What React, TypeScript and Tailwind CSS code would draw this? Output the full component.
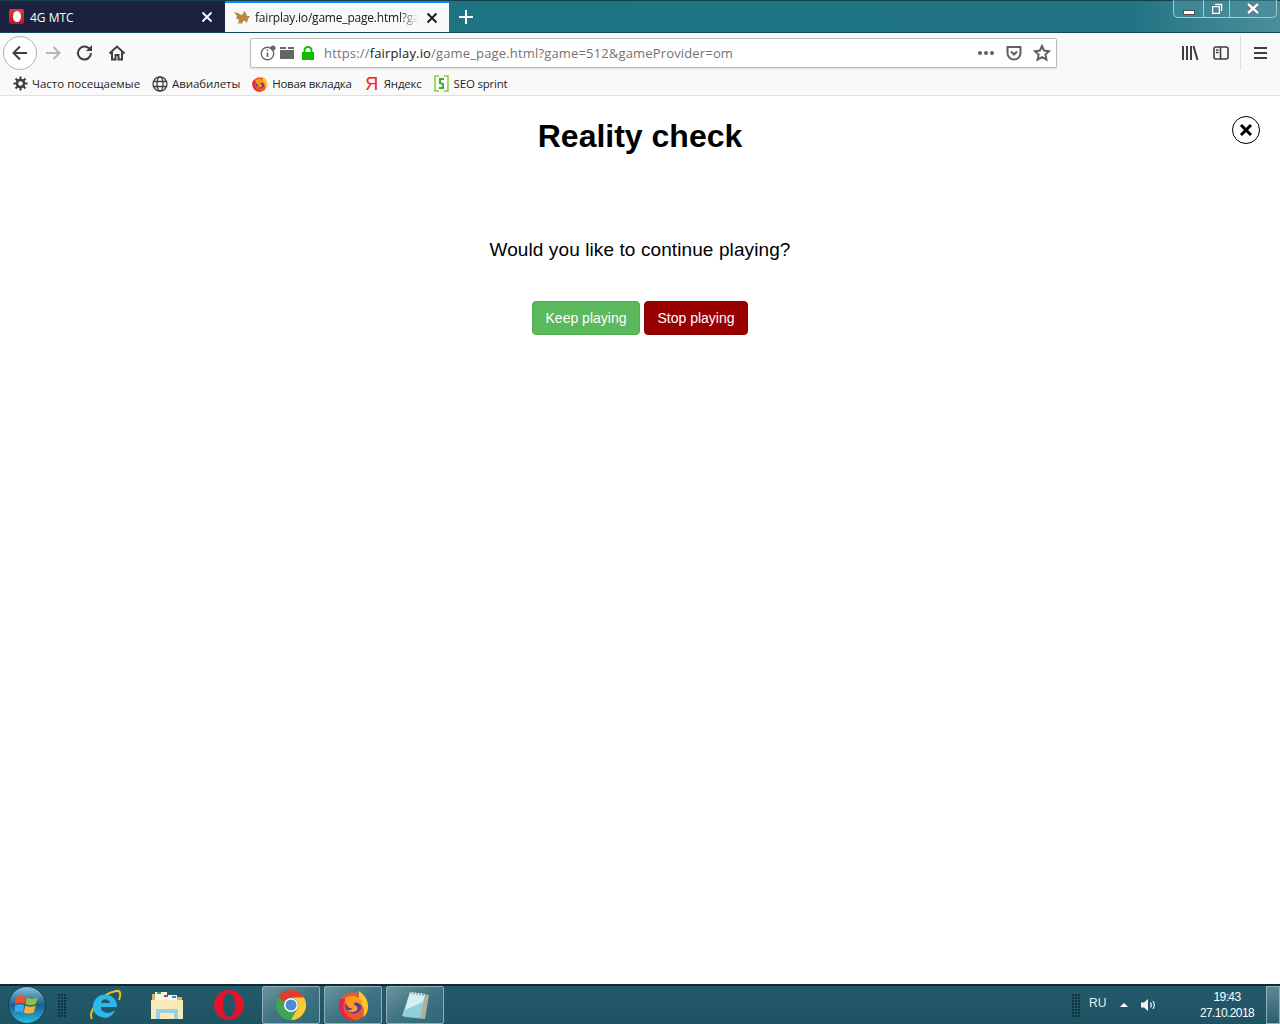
import React from 'react';

const uiFont = "font-['Open_Sans','Noto_Sans',sans-serif]";

const FirefoxIcon = ({ size = 16 }: { size?: number }) => (
    <svg width={size} height={size} viewBox="0 0 32 32">
        <circle cx="15.500" cy="17" r="14.500" fill="#f0582a" />
        <path d="M21 1c6 3 10 9 10 16 0 5-2 9-5 11 2-7 0-14-5-18 1-3 1-6 0-9z" fill="#ffc62e" />
        <path d="M2 9C0 14 0 21 4 26c4 5 10 6 15 5-7-1-12-5-13-11-1-4 0-8 2-11z" fill="#e0234f" />
        <circle cx="16" cy="16" r="8.500" fill="#4f3bb0" />
        <path d="M7 9c4-3 10-4 14-1 3 2 5 6 4 10-1-3-4-5-7-5-2 0-2 2 0 3 3 1 3 5 0 6-3 2-7 1-9-2 2 1 4 1 6-1-4 0-7-3-8-10z" fill="#ff9a1f" />
    </svg>
);

const ToolIcon = ({ children, className = '' }: { children: React.ReactNode; className?: string }) => (
    <svg width="20" height="20" viewBox="0 0 20 20" fill="none" className={className}>
        {children}
    </svg>
);

const Bookmark = ({ icon, label, labelClass = '' }: { icon: React.ReactNode; label: string; labelClass?: string }) => (
    <div className="flex items-center gap-[4px]">
        <div className="flex w-[16px] h-[16px] items-center justify-center">{icon}</div>
        <span className={`text-[11.5px] leading-none text-[#1f1f1f] ${labelClass}`}>{label}</span>
    </div>
);

const Grip = () => (
    <div className="grid grid-cols-3 gap-[1px] w-[8px]">
        {Array.from({ length: 24 }).map((_, i) => (
            <div key={i} className="w-[2px] h-[2px] bg-[#12333e]" />
        ))}
    </div>
);

const TaskSlot = ({ active, children }: { active?: boolean; children: React.ReactNode }) => (
    <div
        className={
            active
                ? 'flex w-[58px] h-[38px] items-center justify-center rounded-[2px] border border-[#8fb0b8] bg-gradient-to-br from-[#6b939e] via-[#3f7482] to-[#2f6675]'
                : 'flex w-[58px] h-[38px] items-center justify-center'
        }
    >
        {children}
    </div>
);

const TabStrip = () => (
    <div className="flex h-[33px] bg-gradient-to-r from-[#1e7383] via-[#1f7383] via-[88%] to-[#4a8e9b] border-t border-[#123f4a] border-b border-b-[#0f4a56]">
        <div className="flex w-[225px] items-center bg-[#1c2140] pl-[9px] pr-[12px]">
            <div className="flex w-[15px] h-[15px] items-center justify-center rounded-[2px] bg-gradient-to-b from-[#ea3a34] to-[#b5161c]">
                <div className="w-[8px] h-[11px] rounded-[50%] bg-white" />
            </div>
            <span className="ml-[6px] flex-1 pt-[2px] text-[12px] font-medium text-white">4G МТС</span>
            <svg width="12" height="12" viewBox="0 0 12 12" stroke="#fff" strokeWidth="1.8">
                <path d="M1.5 1.5l9 9M10.5 1.5l-9 9" />
            </svg>
        </div>
        <div className="flex w-[224px] items-center bg-[#f9f9fa] border-t-2 border-[#0a84ff] pl-[9px] pr-[11px]">
            <svg width="16" height="13" viewBox="0 0 16 13" fill="#b8873b">
                <path d="M0 1l4 1 3 2 2-1 1-3 2 2 1 3 3 0-2 3-1 4-2-2-2 0-1 3-2-1-2 1 1-4-3-2 1-2z" />
            </svg>
            <span className="ml-[5px] w-[164px] whitespace-nowrap text-[12px] tracking-[-0.2px] text-[#18181a] [mask-image:linear-gradient(to_right,black_88%,transparent)]">
                fairplay.io/game_page.html?ga
            </span>
            <svg className="ml-auto" width="12" height="12" viewBox="0 0 12 12" stroke="#18181a" strokeWidth="1.8">
                <path d="M1.5 1.5l9 9M10.5 1.5l-9 9" />
            </svg>
        </div>
        <div className="flex w-[34px] items-center justify-center">
            <svg width="14" height="14" viewBox="0 0 14 14" stroke="#fff" strokeWidth="2">
                <path d="M7 0v14M0 7h14" />
            </svg>
        </div>
        <div className="ml-auto mr-[3px] -mt-px flex w-[104px] h-[18px] rounded-b-[5px] border border-t-0 border-[#a9c9cf] bg-[#4a8f9c]/50">
            <div className="flex w-[30px] items-end justify-center pb-[2px] border-r border-[#a9c9cf]">
                <div className="w-[12px] h-[5px] bg-white border border-[#555]" />
            </div>
            <div className="flex w-[26px] items-center justify-center border-r border-[#a9c9cf]">
                <svg width="12" height="12" viewBox="0 0 12 12" fill="none">
                    <path d="M4 1.500h6.500V8" stroke="#fff" strokeWidth="1.500" />
                    <rect x="1.500" y="3.500" width="7" height="7" stroke="#fff" strokeWidth="1.500" />
                    <rect x="0.500" y="2.500" width="9" height="9" stroke="#555" strokeWidth="0.500" />
                </svg>
            </div>
            <div className="flex flex-1 items-center justify-center">
                <svg width="14" height="11" viewBox="0 0 14 11">
                    <path d="M2 1l10 9M12 1L2 10" stroke="#555" strokeWidth="3.600" />
                    <path d="M2 1l10 9M12 1L2 10" stroke="#fff" strokeWidth="2.400" />
                </svg>
            </div>
        </div>
    </div>
);

const NavToolbar = () => (
    <div className="flex h-[39px] items-center bg-[#f9f9fa]">
        <div className="ml-[3px] flex w-[34px] h-[34px] items-center justify-center rounded-full border border-[#b1b1b3] bg-white">
            <ToolIcon>
                <path d="M17 10H4M10 3.5L3.5 10l6.500 6.500" stroke="#3f3f41" strokeWidth="2" />
            </ToolIcon>
        </div>
        <ToolIcon className="ml-[6px]">
            <path d="M3 10h13M10.500 4l6 6-6 6" stroke="#b5b5b7" strokeWidth="2" />
        </ToolIcon>
        <ToolIcon className="ml-[12px]">
            <path d="M16 10a6.500 6.500 0 1 1-2-4.700L16 7" stroke="#3f3f41" strokeWidth="2" />
            <path d="M17 2v6h-6z" fill="#3f3f41" />
        </ToolIcon>
        <ToolIcon className="ml-[12px]">
            <path d="M2.500 10.500L10 3.500l7.500 7M5 9v7.500h3.500V12h3v4.500H15V9" stroke="#3f3f41" strokeWidth="2" />
        </ToolIcon>
        <div className="ml-[123px] flex w-[807px] h-[30px] items-center rounded-[2px] border border-[#bcbcbc] bg-white shadow-[0_1px_2px_rgba(0,0,0,0.1)] pl-[9px] pr-[5px]">
            <svg width="16" height="16" viewBox="0 0 16 16" fill="none">
                <circle cx="7.500" cy="8.500" r="6.200" stroke="#666" strokeWidth="1.400" />
                <path d="M7.500 7.500v4.500M7.500 4.500v1.600" stroke="#666" strokeWidth="1.600" />
                <circle cx="13" cy="3" r="2.500" fill="#666" />
            </svg>
            <svg className="ml-[4px]" width="14" height="12" viewBox="0 0 14 12" fill="#666">
                <path d="M0 0h6v2H0zM8 0h6v2H8zM0 3h14v9H0z" />
            </svg>
            <svg className="ml-[7px]" width="14" height="14" viewBox="0 0 14 14" fill="#12bc00">
                <path d="M1 6h12v8H1z" />
                <path d="M3.500 6.500V4.500a3.500 3.500 0 0 1 7 0v2" fill="none" stroke="#12bc00" strokeWidth="2" />
            </svg>
            <div className="ml-[9px] flex-1 whitespace-nowrap pt-[3px] text-[13px] tracking-[0.16px] text-[#737373]">
                https://<span className="text-[#18181a]">fairplay.io</span>/game_page.html?game=512&amp;gameProvider=om
            </div>
            <div className="flex gap-[2px]">
                <div className="w-[4px] h-[4px] rounded-full bg-[#5f5f61]" />
                <div className="w-[4px] h-[4px] rounded-full bg-[#5f5f61]" />
                <div className="w-[4px] h-[4px] rounded-full bg-[#5f5f61]" />
            </div>
            <svg className="ml-[11px]" width="18" height="18" viewBox="0 0 18 18" fill="none" stroke="#5f5f61" strokeWidth="2">
                <path d="M2.500 3h13v6a6.500 6.500 0 0 1-13 0z" />
                <path d="M6 7.500l3 3 3-3" />
            </svg>
            <svg className="ml-[10px]" width="18" height="18" viewBox="0 0 18 18" fill="none" stroke="#5f5f61" strokeWidth="2">
                <path d="M9 2l2.100 4.600 5 .6-3.700 3.400 1 5L9 13.100 4.600 15.600l1-5L1.900 7.200l5-.6z" />
            </svg>
        </div>
        <svg className="ml-[124px]" width="18" height="16" viewBox="0 0 18 16" fill="none" stroke="#3f3f41" strokeWidth="2">
            <path d="M2 1v14M6 1v14M10 1v14M12.500 1l4 14" />
        </svg>
        <svg className="ml-[14px]" width="16" height="14" viewBox="0 0 16 14" fill="none" stroke="#3f3f41" strokeWidth="1.600">
            <rect x="1" y="1" width="14" height="12" rx="2" />
            <path d="M7.500 1v12M3 4h2.500M3 6.500h2.500" />
        </svg>
        <div className="ml-[11px] w-px h-[34px] bg-[#dcdcde]" />
        <svg className="ml-[13px]" width="13" height="12" viewBox="0 0 13 12" stroke="#3f3f41" strokeWidth="2">
            <path d="M0 1h13M0 6h13M0 11h13" />
        </svg>
    </div>
);

const BookmarksBar = () => (
    <div className="flex h-[24px] items-center gap-[12px] border-b border-[#e0e0e2] bg-[#f9f9fa] pl-[12px]">
        <Bookmark
            label="Часто посещаемые"
            icon={
                <svg width="15" height="15" viewBox="0 0 16 16" fill="none" stroke="#3f3f41">
                    <circle cx="8" cy="8" r="3.800" strokeWidth="2.600" />
                    <path d="M8 0.500v3M8 12.500v3M0.500 8h3M12.500 8h3M2.700 2.700l2.100 2.100M11.200 11.200l2.100 2.100M13.300 2.700l-2.100 2.100M4.800 11.200l-2.100 2.100" strokeWidth="2.200" />
                </svg>
            }
        />
        <Bookmark
            label="Авиабилеты"
            labelClass="tracking-[-0.1px]"
            icon={
                <svg width="16" height="16" viewBox="0 0 16 16" fill="none" stroke="#3f3f41" strokeWidth="1.300">
                    <circle cx="8" cy="8" r="7" />
                    <ellipse cx="8" cy="8" rx="3" ry="7" />
                    <path d="M1.500 5.500h13M1.500 10.500h13" />
                </svg>
            }
        />
        <Bookmark label="Новая вкладка" labelClass="tracking-[-0.2px]" icon={<FirefoxIcon />} />
        <Bookmark
            label="Яндекс"
            labelClass="tracking-[-0.2px]"
            icon={<span className="text-[18px] leading-none font-['Liberation_Sans',sans-serif] text-[#f2231c]">Я</span>}
        />
        <Bookmark
            label="SEO sprint"
            labelClass="tracking-[-0.2px]"
            icon={
                <svg width="15" height="17" viewBox="0 0 15 17" fill="none" stroke="#3fae2a" strokeWidth="1.500">
                    <path d="M5 1H1v15h4M10 1h4v15h-4" stroke="#8dc63f" />
                    <path d="M10 4H6v4l3 1v4H5" strokeWidth="2" />
                </svg>
            }
        />
    </div>
);

const RealityCheck = () => (
    <div className="relative flex-1 bg-white font-['Liberation_Sans',sans-serif] text-black">
        <div className="absolute top-[20px] right-[20px] flex w-[28px] h-[28px] items-center justify-center rounded-full border-[1.5px] border-black">
            <svg width="14" height="14" viewBox="0 0 14 14" stroke="#000" strokeWidth="3">
                <path d="M2 2l10 10M12 2L2 12" />
            </svg>
        </div>
        <h1 className="pt-[21px] text-center text-[32px] leading-[39px] font-bold">Reality check</h1>
        <p className="mt-[81px] text-center text-[19px] leading-[26px] tracking-[0.1px]">Would you like to continue playing?</p>
        <div className="mt-[38px] flex justify-center gap-[4px]">
            <button className="h-[34px] w-[108px] rounded-[4px] border border-[#4cae4c] bg-[#5cb85c] text-[14px] text-white">Keep playing</button>
            <button className="h-[34px] w-[104px] rounded-[4px] border border-[#8a0000] bg-[#990000] text-[14px] text-white">Stop playing</button>
        </div>
    </div>
);

const Taskbar = () => (
    <div className="flex h-[40px] items-center border-t-2 border-[#0f2a33] bg-gradient-to-b from-[#235a6b] to-[#1e5363]">
        <div className="ml-[8px] flex w-[38px] h-[38px] items-center justify-center rounded-full border border-[#16404f] bg-gradient-to-b from-[#8cc4de] via-[#1c5f8c] to-[#23c0e4]">
            <svg width="24" height="22" viewBox="0 0 22 20">
                <path d="M1 3c3-2 6-2 9 0l-1.500 6c-3-1.500-6-1.500-9 0z" fill="#f0532b" />
                <path d="M11 3c3 2 6 2 10 0l-2 6c-3 1.500-6 1.500-9.500 0z" fill="#8cc63f" />
                <path d="M0 10.500c3-1.500 6-1.500 8.500 0L7 17c-3-1.500-5-1.500-8 0z" fill="#3fa9f5" />
                <path d="M9.500 10.500c3 1.500 6 1.500 9.500 0l-2 6.500c-3 1-6 1-9 0z" fill="#fbb03b" />
            </svg>
        </div>
        <div className="ml-[12px]">
            <Grip />
        </div>
        <div className="ml-[10px] flex gap-[4px]">
            <TaskSlot>
                <svg width="34" height="34" viewBox="0 0 34 34" fill="none">
                    <path d="M4 31C0 24 12 6 28 3c5-1 5 4 3 9" stroke="#f2c21a" strokeWidth="2" />
                    <path d="M5 18a12 12 0 0 1 24 1H13c0 6 8 8 14 3-2 7-9 9-14 7-6-2-9-7-8-11z" fill="#2bb8ea" />
                    <path d="M13 15h9c-1-5-8-5-9 0z" fill="#235a6b" />
                </svg>
            </TaskSlot>
            <TaskSlot>
                <svg width="34" height="32" viewBox="0 0 34 32">
                    <path d="M2 5h12l2 3h16v21H2z" fill="#d9b65c" />
                    <rect x="5" y="3" width="12" height="8" fill="#f5f5f0" />
                    <rect x="7" y="3" width="4" height="2" fill="#3aa83a" />
                    <rect x="14" y="6" width="13" height="6" fill="#f5f5f0" />
                    <rect x="14" y="6" width="4" height="2" fill="#c8402a" />
                    <rect x="22" y="7" width="4" height="2" fill="#3a8ac8" />
                    <path d="M1 11h32v19H1z" fill="#f8eab8" />
                    <path d="M6 30V20h22v10h-4v-6H10v6z" fill="#9ad0e6" />
                </svg>
            </TaskSlot>
            <TaskSlot>
                <svg width="32" height="32" viewBox="0 0 32 32">
                    <path fillRule="evenodd" d="M16 1a15 15 0 1 1 0 30 15 15 0 0 1 0-30zm0 3c-3.500 0-6 5.400-6 12s2.500 12 6 12 6-5.400 6-12-2.500-12-6-12z" fill="#e0152b" />
                </svg>
            </TaskSlot>
            <TaskSlot active>
                <svg width="30" height="30" viewBox="0 0 30 30">
                    <circle cx="15" cy="15" r="15" fill="#3ca653" />
                    <path d="M15 0a15 15 0 0 1 13 7.500H15a7.500 7.500 0 0 0-7 4.500L2.500 6.500A15 15 0 0 1 15 0z" fill="#e33b2e" />
                    <path d="M28 7.500A15 15 0 0 1 15 30l6.500-11.500A7.500 7.500 0 0 0 15 7.500z" fill="#fbc934" />
                    <circle cx="15" cy="15" r="7" fill="#fff" />
                    <circle cx="15" cy="15" r="5.500" fill="#4a89dc" />
                </svg>
            </TaskSlot>
            <TaskSlot active>
                <FirefoxIcon size={31} />
            </TaskSlot>
            <TaskSlot active>
                <svg width="30" height="32" viewBox="0 0 30 32">
                    <path d="M10 3l19 3-4 24-21-2z" fill="#aeb09f" />
                    <path d="M10 3l15 2-5 24-18-2z" fill="#8fd0dc" />
                    <path d="M10 3l15 2-2 8-18 8z" fill="#d2eff3" />
                    <path d="M11 2v3M14 2.500v3M17 3v3M20 3.500v3M23 4v3" stroke="#777" strokeWidth="1" />
                </svg>
            </TaskSlot>
        </div>
        <div className="ml-auto">
            <Grip />
        </div>
        <span className="ml-[9px] w-[17px] -mt-[5px] text-[12px] text-[#e8f0f2] font-['Liberation_Sans',sans-serif]">RU</span>
        <div className="ml-[14px] w-0 h-0 border-x-[4px] border-x-transparent border-b-[4px] border-b-white" />
        <svg className="ml-[12px]" width="17" height="14" viewBox="0 0 17 14" fill="none">
            <path d="M1 4.500h3L8 1v12L4 9.500H1z" fill="#f2f2f2" />
            <path d="M10.500 4.500c1 1.500 1 3.500 0 5M13 3c1.600 2.500 1.600 5.500 0 8" stroke="#f2f2f2" strokeWidth="1.200" />
        </svg>
        <div className="ml-[31px] flex w-[78px] flex-col items-center text-[12px] leading-[16px] tracking-[-0.6px] text-white font-['Liberation_Sans',sans-serif]">
            <span>19:43</span>
            <span>27.10.2018</span>
        </div>
        <div className="w-[14px] h-[38px] border border-[#8fb0b8] bg-gradient-to-b from-[#5f8792] to-[#2a6070]" />
    </div>
);

const App: React.FC = () => {
    return (
        <div className={`flex h-[1024px] w-[1280px] flex-col overflow-hidden ${uiFont}`}>
            <TabStrip />
            <NavToolbar />
            <BookmarksBar />
            <RealityCheck />
            <Taskbar />
        </div>
    );
};

export default App;
